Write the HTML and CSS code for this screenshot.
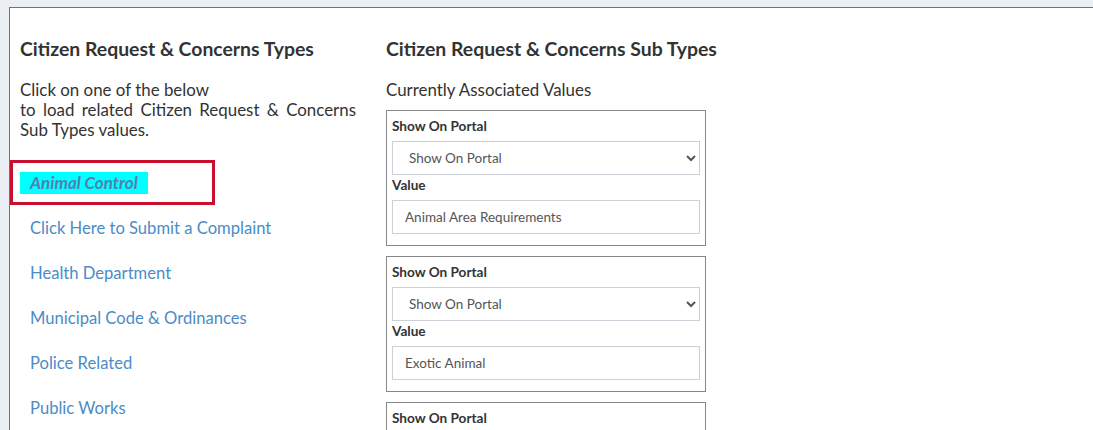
FILE: index.html
```html
<!DOCTYPE html>
<html>
<head>
<meta charset="utf-8">
<link rel="stylesheet" href="styles.css">
</head>
<body>
<div class="panel">
  <div class="col-left">
    <h2 class="title">Citizen Request &amp; Concerns Types</h2>
    <p class="intro">Click on one of the below<br>to load related Citizen Request &amp; Concerns Sub Types values.</p>
    <ul class="types">
      <li class="type selected"><a class="type-link active" href="#">Animal Control</a></li>
      <li class="type"><a class="type-link" href="#">Click Here to Submit a Complaint</a></li>
      <li class="type"><a class="type-link" href="#">Health Department</a></li>
      <li class="type"><a class="type-link" href="#">Municipal Code &amp; Ordinances</a></li>
      <li class="type"><a class="type-link" href="#">Police Related</a></li>
      <li class="type"><a class="type-link" href="#">Public Works</a></li>
    </ul>
  </div>
  <div class="col-right">
    <h2 class="title">Citizen Request &amp; Concerns Sub Types</h2>
    <p class="sub">Currently Associated Values</p>
    <div class="card">
      <label class="lbl">Show On Portal</label>
      <select class="field sel"><option>Show On Portal</option></select>
      <label class="lbl">Value</label>
      <input class="field inp" type="text" value="Animal Area Requirements">
    </div>
    <div class="card">
      <label class="lbl">Show On Portal</label>
      <select class="field sel"><option>Show On Portal</option></select>
      <label class="lbl">Value</label>
      <input class="field inp" type="text" value="Exotic Animal">
    </div>
    <div class="card">
      <label class="lbl">Show On Portal</label>
      <select class="field sel"><option>Show On Portal</option></select>
      <label class="lbl">Value</label>
      <input class="field inp" type="text" value="">
    </div>
  </div>
</div>
</body>
</html>
```
FILE: styles.css
```css
html, body {
  margin: 0;
  padding: 0;
  background: #ebeef2;
  overflow: hidden;
  height: 430px;
}
body {
  font-family: "Lato", "Noto Sans", sans-serif;
  color: #333;
}
.panel {
  margin: 7px 0 0 9px;
  border-top: 1px solid #3d7fb5;
  border-left: 1px solid #3d7fb5;
  background: #fff;
  display: flex;
  gap: 30px;
  padding: 29px 0 0 10px;
  min-height: 500px;
}
.col-left {
  width: 336px;
}
.col-right {
  width: 320px;
}
.title {
  margin: 0;
  font-size: 19.4px;
  line-height: 24px;
  font-weight: 700;
  color: #333;
  white-space: nowrap;
}
.intro {
  margin: 19px 0 20px;
  font-size: 16.9px;
  line-height: 20px;
  text-align: justify;
}
.types {
  list-style: none;
  margin: 0;
  padding: 0;
}
.type {
  height: 45px;
  display: flex;
  align-items: center;
  padding-left: 10px;
}
.type.selected {
  margin-left: -10px;
  width: 205px;
  box-sizing: border-box;
  border: 3px solid #c8102e;
  padding-left: 7px;
}
.type-link {
  font-size: 16.6px;
  line-height: 22px;
  color: #4a8cc7;
  text-decoration: none;
}
.type-link.active {
  background: #00ffff;
  font-style: italic;
  font-weight: 700;
  font-size: 17px;
  color: #5280b0;
  padding: 0 10px;
}
.sub {
  margin: 19px 0 10px;
  font-size: 16.9px;
  line-height: 20px;
}
.card {
  border: 1px solid #888;
  padding: 5px 5px 11px;
  margin-bottom: 10px;
  display: flex;
  flex-direction: column;
}
.lbl {
  font-size: 13.6px;
  font-weight: 700;
  line-height: 20px;
  margin-bottom: 5px;
  color: #333;
}
.field {
  box-sizing: border-box;
  height: 34px;
  border: 1px solid #ccd0d8;
  border-radius: 0;
  background: #fff;
  font-family: inherit;
  font-size: 13.5px;
  color: #555;
  width: 100%;
}
.sel {
  padding-left: 12px;
}
.inp {
  padding-left: 12px;
  outline: none;
}
```
